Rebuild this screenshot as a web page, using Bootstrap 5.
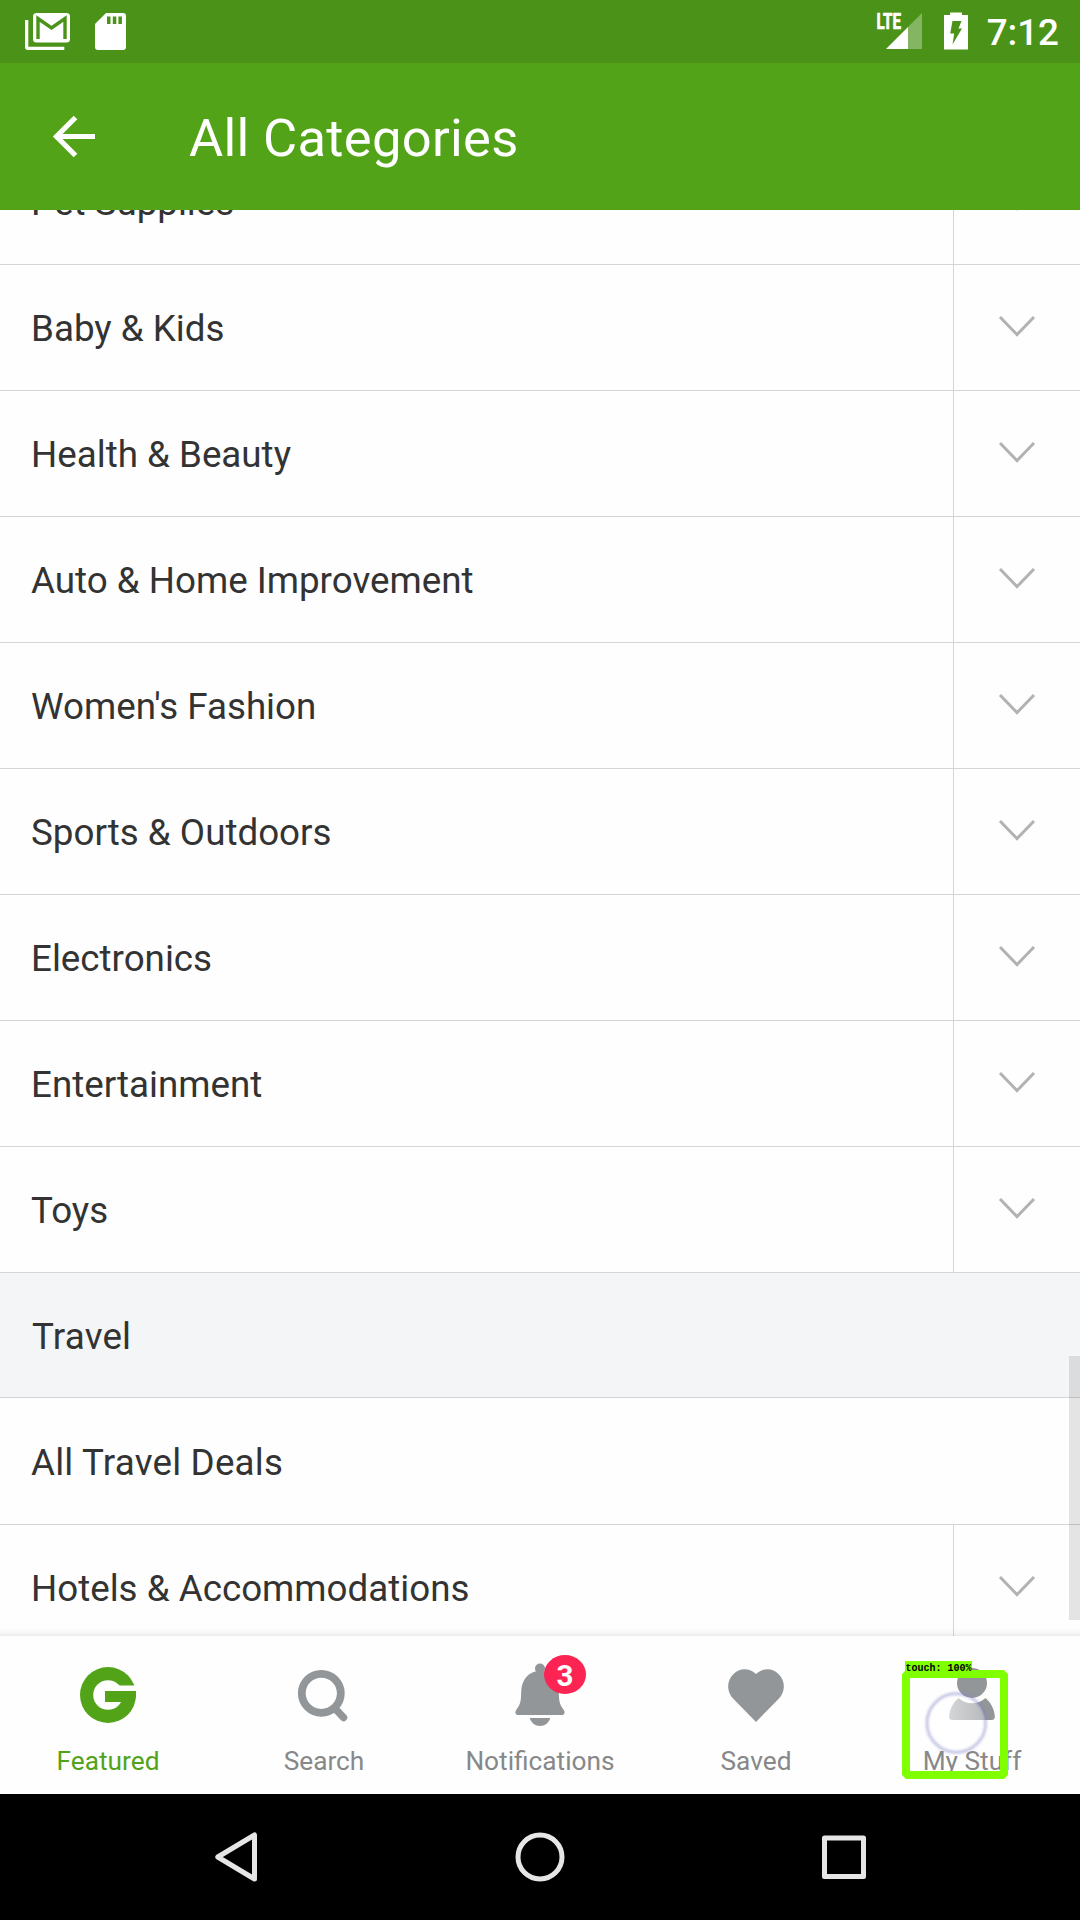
<!DOCTYPE html>
<html lang="en">
<head>
<meta charset="utf-8">
<meta name="viewport" content="width=device-width, initial-scale=1">
<title>All Categories</title>
<link href="https://cdn.jsdelivr.net/npm/bootstrap@5.3.0/dist/css/bootstrap.min.css" rel="stylesheet">
<style>
  body { font-family: Roboto, "Liberation Sans", sans-serif; background: #fefefe; }
  .screen { width: 1080px; height: 1920px; }
  svg { display: block; flex: none; }
  .status-bar { height: 63px; background: #4b9218; }
  .clock { font-size: 36.75px; line-height: 1; font-weight: 500; margin: 3px 21px 0 18px; }
  .app-bar { height: 147px; background: #53a318; }
  .app-title { font-size: 52.5px; line-height: 1; font-weight: 400; letter-spacing: .3px; margin: 3px 0 0 94px; }
  .category-list { min-height: 0; }
  .category-rows { margin-top: -71px; }
  .cat-row { height: 126px; border-bottom: 1px solid #d3d5d6; flex: none; }
  .cat-name { font-size: 36.75px; line-height: 1; color: #333; padding: 3px 0 0 31px; }
  .cat-toggle { width: 127px; border-left: 1px solid #d3d5d6; padding: 0 1px 3px 0; }
  .cat-head { height: 125px; background: #f4f5f7; }
  .cat-all { height: 127px; }
  .cat-head .cat-name, .cat-all .cat-name { padding-top: 5px; letter-spacing: .2px; }
  .cat-head .cat-name { padding-left: 32px; }
  .scroll-thumb { right: 0; top: 1146px; width: 11px; height: 264px; background: rgba(0,0,0,.1); }
  .list-shade { left: 0; right: 0; bottom: 0; height: 8px; background: linear-gradient(rgba(0,0,0,0), rgba(0,0,0,.035) 70%, rgba(0,0,0,.08)); }
  .tab-bar { height: 158px; background: #fefefe; }
  .tab-label { font-size: 26.25px; line-height: 30px; color: #868889; margin-top: -5px; }
  .tab-label.on { color: #53a318; }
  .system-bar { height: 126px; background: #000; }
  .touch-mark { left: 902px; top: 1661px; }
</style>
</head>
<body>
<div class="screen position-relative d-flex flex-column overflow-hidden mx-auto">

  <header class="status-bar d-flex align-items-center justify-content-between text-white flex-shrink-0">
    <svg width="140" height="63" fill="#fff">
      <path d="M23.500 20h3.300v26.700h36V50H26.500a3 3 0 0 1-3-3z" transform="translate(1.500 0)"/>
      <rect x="33" y="13" width="37" height="29.500" rx="3.500"/>
      <path d="M38 39V18.500l13.500 9.500L65 18.500V39" fill="none" stroke="#4b9218" stroke-width="3.400"/>
      <path d="M106 13h17a3 3 0 0 1 3 3v31a3 3 0 0 1-3 3H98a3 3 0 0 1-3-3V24z"/>
      <path d="M107 16.500h3.500V24H107zM112.800 16.500h3.500V24h-3.500zM118.400 16.500h3.500V24h-3.500z" fill="#4b9218"/>
    </svg>
    <div class="d-flex align-items-center">
      <svg width="98" height="63" viewBox="870 0 98 63" fill="#fff">
        <text x="875.500" y="29" font-size="22" font-weight="700" stroke="#fff" stroke-width=".7" textLength="24.500" lengthAdjust="spacingAndGlyphs">LTE</text>
        <path d="M907 27l14-14v36h-14z" opacity=".32"/>
        <path d="M907 27v22h-22z"/>
        <path d="M949 12.500h12V15h6v34.500h-24V15h6z"/>
        <path d="M951.500 21h9l-3 7.500h3.500l-9.500 16 1.700-11h-4z" fill="#4b9218"/>
      </svg>
      <span class="clock">7:12</span>
    </div>
  </header>

  <nav class="app-bar d-flex align-items-center text-white flex-shrink-0">
    <svg width="95" height="147" viewBox="0 63 95 147" fill="none" stroke="#fff" stroke-width="5.200">
      <path d="M95 136.500H57M75.500 117.500l-19 19 19 19"/>
    </svg>
    <h1 class="app-title">All Categories</h1>
  </nav>

  <main class="category-list flex-grow-1 overflow-hidden position-relative">
    <div class="category-rows d-flex flex-column" id="rows"></div>
    <div class="scroll-thumb position-absolute"></div>
    <div class="list-shade position-absolute"></div>
  </main>

  <footer class="tab-bar d-flex flex-shrink-0 text-center">
    <div class="col">
      <svg width="216" height="115" viewBox="0 1636 216 115">
        <circle cx="108" cy="1695" r="28" fill="#53a318"/>
        <circle cx="108" cy="1695" r="14.800" fill="#fefefe"/>
        <path d="M105 1685.500h32v5.500h-32z" fill="#fefefe"/>
        <path d="M105 1691h31v6l-4 5h-27z" fill="#53a318"/>
      </svg>
      <div class="tab-label on">Featured</div>
    </div>
    <div class="col">
      <svg width="216" height="115" viewBox="216 1636 216 115" fill="none" stroke="#929699" stroke-linecap="round">
        <circle cx="321.300" cy="1693.300" r="19.500" stroke-width="7.800"/>
        <path d="M335 1708.500l8.500 9" stroke-width="7.500"/>
      </svg>
      <div class="tab-label">Search</div>
    </div>
    <div class="col">
      <svg width="216" height="115" viewBox="432 1636 216 115" fill="#929699">
        <circle cx="540" cy="1668.500" r="5"/>
        <path d="M540 1671c-11 0-18.500 8-18.800 21-.2 10-1 12.500-5 18-1.600 2.500-.6 5 1.800 5h44c2.400 0 3.400-2.500 1.800-5-4-5.500-4.800-8-5-18-.3-13-7.800-21-18.800-21z"/>
        <path d="M529.700 1718h20.600c-1.500 5-5.500 8-10.300 8s-8.800-3-10.300-8z"/>
        <ellipse cx="565" cy="1674.500" rx="21" ry="19.500" fill="#fb2452"/>
        <text x="565" y="1686" text-anchor="middle" font-size="29.500" font-weight="700" fill="#fff">3</text>
      </svg>
      <div class="tab-label">Notifications</div>
    </div>
    <div class="col">
      <svg width="216" height="115" viewBox="648 1636 216 115" fill="#929699">
        <path d="M756 1674c8-7 17-5.500 22.500 0 7 7 7.300 17.500 0 25L756 1722l-22.500-23c-7.300-7.500-7-18 0-25 5.500-5.500 14.500-7 22.500 0z"/>
      </svg>
      <div class="tab-label">Saved</div>
    </div>
    <div class="col">
      <svg width="216" height="115" viewBox="864 1636 216 115" fill="#929699">
        <circle cx="972" cy="1683" r="15"/>
        <path d="M958.500 1698c7.500 7 19.500 7 27 0 5 4 9 11 9.300 18.500.1 2.200-1 3.500-3 3.500h-39.600c-2 0-3.100-1.300-3-3.500.3-7.500 4.300-14.500 9.300-18.500z"/>
      </svg>
      <div class="tab-label">My Stuff</div>
    </div>
  </footer>

  <div class="system-bar flex-shrink-0">
    <svg width="1080" height="126" viewBox="0 1794 1080 126" fill="none" stroke="#e6e6e6" stroke-width="5" stroke-linejoin="round">
      <path d="M217.800 1857l36.700-22v44z"/>
      <circle cx="540" cy="1857" r="22"/>
      <rect x="824.500" y="1838" width="39" height="38.500"/>
    </svg>
  </div>

  <!-- touch marker over the last tab -->
  <svg class="touch-mark position-absolute" width="108" height="120" viewBox="902 1661 108 120">
    <defs>
      <linearGradient id="press" x1="0" x2="1"><stop offset="0" stop-color="#fff" stop-opacity=".75"/><stop offset="1" stop-color="#fff" stop-opacity=".35"/></linearGradient>
      <clipPath id="below"><path d="M925 1697h62v56h-62z"/></clipPath>
      <filter id="soft" x="-20%" y="-20%" width="140%" height="140%"><feGaussianBlur stdDeviation=".8"/></filter>
    </defs>
    <circle cx="956.300" cy="1723" r="29" fill="url(#press)" clip-path="url(#below)"/>
    <circle cx="956.300" cy="1723" r="29.300" fill="none" stroke="#8084c8" stroke-opacity=".42" stroke-width="3.200" filter="url(#soft)"/>
    <rect x="906" y="1674" width="98" height="101" fill="none" stroke="#7fff00" stroke-width="8" stroke-linejoin="bevel"/>
    <path d="M905 1661h67v14h-67z" fill="#7fff00"/>
    <text x="905.500" y="1671" font-family="'Liberation Mono', monospace" font-size="10.500" font-weight="700" textLength="66" lengthAdjust="spacingAndGlyphs">touch: 100%</text>
  </svg>
</div>

<script src="https://cdn.jsdelivr.net/npm/bootstrap@5.3.0/dist/js/bootstrap.bundle.min.js"></script>
<script>
  const categories = [
    ["Pet Supplies"], ["Baby & Kids"], ["Health & Beauty"], ["Auto & Home Improvement"],
    ["Women's Fashion"], ["Sports & Outdoors"], ["Electronics"], ["Entertainment"], ["Toys"],
    ["Travel", "cat-head"], ["All Travel Deals", "cat-all"], ["Hotels & Accommodations"]
  ];
  const chevron = '<svg width="38" height="22" fill="none" stroke="#b0b2b3" stroke-width="3"><path d="M2 2l17 17.500L36 2"/></svg>';
  const holder = document.getElementById("rows");
  for (const [name, kind] of categories) {
    const row = document.createElement("div");
    row.className = "cat-row d-flex " + (kind || "");
    const label = document.createElement("div");
    label.className = "cat-name flex-grow-1 d-flex align-items-center";
    label.textContent = name;
    row.append(label);
    if (!kind) {
      const toggle = document.createElement("div");
      toggle.className = "cat-toggle d-flex align-items-center justify-content-center";
      toggle.innerHTML = chevron;
      row.append(toggle);
    }
    holder.append(row);
  }
</script>
</body>
</html>
